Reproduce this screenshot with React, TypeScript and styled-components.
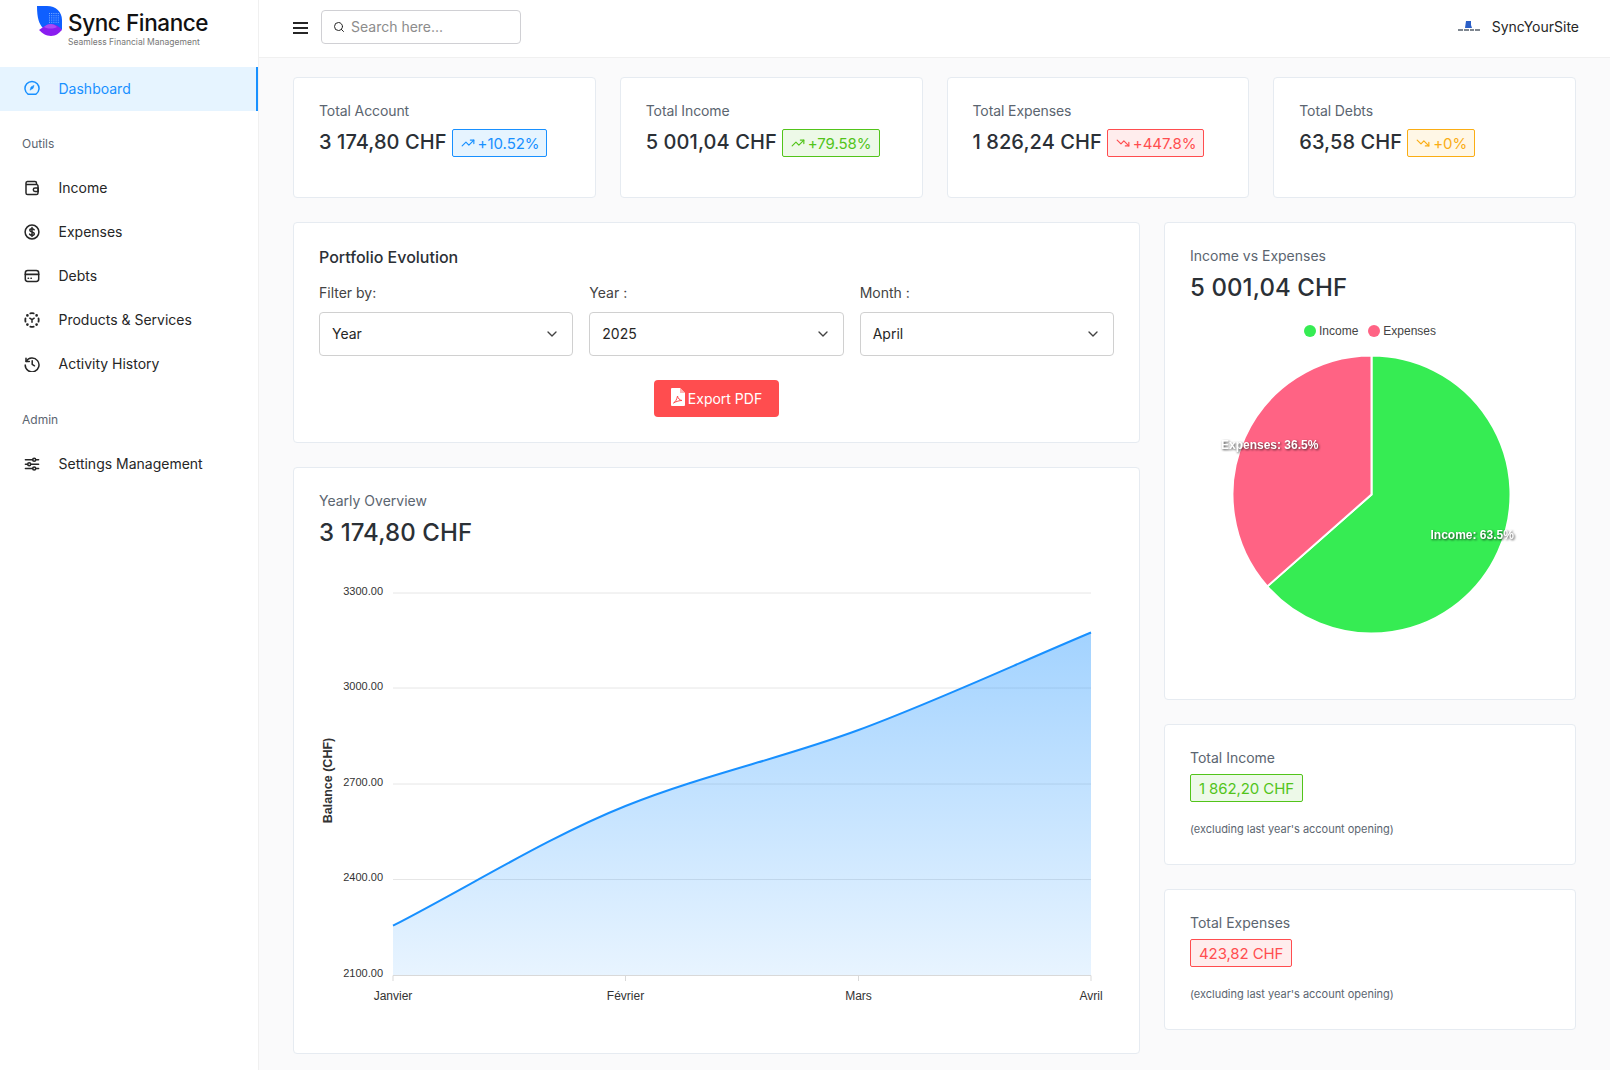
import React from "react";
import styled, { createGlobalStyle } from "styled-components";
import { ChevronDown, TrendingUp, TrendingDown, Search } from "lucide-react";

const FONT = `"Inter", "Noto Sans", "Liberation Sans", sans-serif`;
const INK = "#2b3036";
const MUTED = "#5b6570";

const Global = createGlobalStyle`
  html, body { margin: 0; padding: 0; background: #fafafb; }
  * { box-sizing: border-box; }
  body { font-family: ${FONT}; color: ${INK}; width: 1610px; height: 1070px; overflow: hidden; }
`;

const Shell = styled.div`
  display: grid;
  grid-template-columns: 259px 1fr;
  width: 1610px;
  height: 1070px;
`;

const Sidebar = styled.aside`
  background: #fff;
  border-right: 1px solid #f0f0f0;
  display: flex;
  flex-direction: column;
`;

const Brand = styled.div`
  height: 67px;
  padding: 6px 0 0 37px;
  display: flex;
  gap: 5px;
  align-items: flex-start;
`;

const BrandText = styled.div`
  display: flex;
  flex-direction: column;
  padding-top: 3px;
`;

const BrandName = styled.div`
  font-size: 22.5px;
  line-height: 27px;
  font-weight: 500;
  color: #111;
  letter-spacing: -0.4px;
`;

const BrandTag = styled.div`
  font-size: 8.5px;
  line-height: 10px;
  color: #777;
  margin-top: 1px;
`;

const NavItem = styled.div<{ $active?: boolean }>`
  height: 44px;
  display: flex;
  align-items: center;
  gap: 19px;
  padding: 0 0 ${(p) => (p.$active ? "2px" : "1px")} 23.500px;
  font-size: 14px;
  color: ${(p) => (p.$active ? "#1890ff" : "#262626")};
  background: ${(p) => (p.$active ? "#e6f4ff" : "transparent")};
  border-right: ${(p) => (p.$active ? "2px solid #1890ff" : "none")};
  width: ${(p) => (p.$active ? "258px" : "auto")};
  svg { flex: none; }
`;

const NavGroup = styled.div<{ $top: number }>`
  font-size: 12px;
  line-height: 16px;
  color: ${MUTED};
  padding: ${(p) => p.$top}px 0 14px 22px;
`;

const Main = styled.div`
  display: flex;
  flex-direction: column;
  min-width: 0;
`;

const Topbar = styled.header`
  height: 58px;
  background: #fff;
  border-bottom: 1px solid #f0f0f0;
  display: flex;
  align-items: center;
  padding: 0 31px 4px 34px;
`;

const Burger = styled.div`
  width: 15px;
  height: 12px;
  display: flex;
  flex-direction: column;
  justify-content: space-between;
  margin: 2px 13px 0 0;
  span { height: 2px; background: #262626; display: block; }
`;

const SearchBox = styled.div`
  width: 200px;
  height: 34px;
  border: 1px solid #d0d0d4;
  border-radius: 4px;
  display: flex;
  align-items: center;
  padding-left: 11px;
  gap: 6px;
  font-size: 14px;
  color: #8c8c8c;
`;

const Spacer = styled.div`
  flex: 1;
`;

const UserName = styled.div`
  font-size: 14px;
  color: #262626;
  margin-left: 11px;
`;

const Content = styled.main`
  padding: 19px 34px 0;
  display: flex;
  flex-direction: column;
  gap: 24px;
`;

const StatRow = styled.div`
  display: grid;
  grid-template-columns: repeat(4, 1fr);
  gap: 24px;
`;

const Card = styled.section`
  background: #fff;
  border: 1px solid #e6ebf1;
  border-radius: 4px;
`;

const StatCard = styled(Card)`
  height: 121px;
  padding: 22px 25px;
`;

const StatLabel = styled.div`
  font-size: 14px;
  line-height: 22px;
  letter-spacing: -0.1px;
  color: ${MUTED};
`;

const StatValueRow = styled.div`
  display: flex;
  align-items: center;
  gap: 5px;
  margin-top: 5px;
`;

const StatValue = styled.div`
  font-size: 20px;
  line-height: 28px;
  font-weight: 500;
  letter-spacing: 0.08px;
  color: ${INK};
  white-space: nowrap;
`;

type Tone = "blue" | "green" | "red" | "amber";
const toneColor: Record<Tone, string> = { blue: "#1890ff", green: "#52c41a", red: "#ff4d4f", amber: "#faad14" };
const toneBg: Record<Tone, string> = { blue: "#e6f4ff", green: "#edf9e8", red: "#ffeded", amber: "#fff7e6" };

const Badge = styled.div<{ $tone: Tone }>`
  height: 28px;
  margin-top: 2px;
  display: inline-flex;
  align-items: center;
  gap: 3px;
  padding: 0 7px 0 8px;
  font-size: 15px;
  letter-spacing: -0.05px;
  color: ${(p) => toneColor[p.$tone]};
  background: ${(p) => toneBg[p.$tone]};
  border: 1px solid ${(p) => toneColor[p.$tone]};
  border-radius: 2px;
  white-space: nowrap;
`;

const Columns = styled.div`
  display: grid;
  grid-template-columns: 847px 412px;
  gap: 24px;
`;

const Stack = styled.div`
  display: flex;
  flex-direction: column;
  gap: 24px;
`;

const FilterCard = styled(Card)`
  height: 221px;
  padding: 23px 25px;
`;

const FilterTitle = styled.h2`
  margin: 0;
  font-size: 16px;
  line-height: 22px;
  font-weight: 500;
  color: ${INK};
`;

const FilterGrid = styled.div`
  display: grid;
  grid-template-columns: repeat(3, 1fr);
  gap: 16px;
  margin-top: 14px;
`;

const FilterLabel = styled.div`
  font-size: 14px;
  line-height: 22px;
  color: #434343;
  margin-bottom: 8px;
`;

const SelectBox = styled.div`
  height: 44px;
  border: 1px solid #d0d0d0;
  border-radius: 4px;
  display: flex;
  align-items: center;
  justify-content: space-between;
  padding: 0 12px 1px;
  font-size: 14px;
  color: #262626;
`;

const ExportRow = styled.div`
  display: flex;
  justify-content: center;
  margin-top: 24px;
`;

const ExportButton = styled.div`
  width: 125px;
  height: 37px;
  border-radius: 4px;
  background: #ff4d4f;
  color: #fff;
  font-size: 14px;
  display: flex;
  align-items: center;
  justify-content: center;
  gap: 3px;
  svg { margin-top: -3px; }
`;

const ChartCard = styled(Card)`
  height: 587px;
  padding: 22px 25px 0;
`;

const CardCaption = styled.div`
  font-size: 14px;
  line-height: 22px;
  color: ${MUTED};
`;

const BigValue = styled.div`
  font-size: 24px;
  line-height: 32px;
  font-weight: 500;
  letter-spacing: 0.1px;
  color: ${INK};
  margin-top: 5px;
`;

const ChartSvg = styled.svg`
  display: block;
  margin: 5px 0 0 -25px;
`;

const PieCard = styled(Card)`
  height: 478px;
  padding: 22px 25px 0;
`;

const Legend = styled.div`
  display: flex;
  justify-content: center;
  gap: 10px;
  margin-top: 20px;
  font: 12px "Liberation Sans", Arial, sans-serif;
  color: #444;
`;

const LegendItem = styled.div`
  display: flex;
  align-items: center;
  gap: 3px;
`;

const Dot = styled.span<{ $color: string }>`
  width: 12px;
  height: 12px;
  border-radius: 50%;
  background: ${(p) => p.$color};
`;

const PieSvg = styled.svg`
  display: block;
  margin: 17px 0 0 -25px;
`;

const SumCard = styled(Card)`
  height: 141px;
  padding: 22px 25px;
`;

const SumValue = styled.div<{ $tone: Tone }>`
  display: inline-flex;
  align-items: center;
  height: 28px;
  padding: 0 8px;
  margin-top: 5px;
  font-size: 15px;
  letter-spacing: -0.1px;
  color: ${(p) => toneColor[p.$tone]};
  background: ${(p) => toneBg[p.$tone]};
  border: 1px solid ${(p) => toneColor[p.$tone]};
  border-radius: 2px;
`;

const SumNote = styled.div`
  margin-top: 19px;
  font-size: 11px;
  line-height: 16px;
  letter-spacing: -0.02px;
  color: ${MUTED};
`;

const ChartLabel = styled.text`
  font-family: "Liberation Sans", Arial, sans-serif;
  font-size: 12px;
  fill: #333;
`;

const SmallLabel = styled(ChartLabel)`
  font-size: 11px;
`;

const AxisTitle = styled(ChartLabel)`
  font-weight: 700;
  font-size: 12.5px;
`;

const PieLabel = styled.text`
  font-family: "Liberation Sans", Arial, sans-serif;
  font-size: 12px;
  font-weight: 700;
  fill: #fff;
  filter: drop-shadow(1px 1px 1px rgba(0, 0, 0, 0.7));
`;

const I = ({ children, color = "currentColor" }: { children: React.ReactNode; color?: string }) => (
  <svg width="16" height="16" viewBox="0 0 16 16" fill="none" stroke={color} strokeWidth="1.5" strokeLinecap="round" strokeLinejoin="round">
    {children}
  </svg>
);

const DashIcon = () => (
  <I>
    <path d="M4 14.200A7 7 0 1 1 12 14.200Z" />
    <path d="M6.300 9.800 7 7l3-1.600-1 3-2.700 1.400Z" fill="currentColor" strokeWidth="0.6" />
  </I>
);
const WalletIcon = () => (
  <I>
    <path d="M12.500 4.500V3a1.600 1.600 0 0 0-1.600-1.600H3.400A1.600 1.600 0 0 0 2 3v10a1.600 1.600 0 0 0 1.600 1.600h8.800A1.600 1.600 0 0 0 14 13V6a1.500 1.500 0 0 0-1.500-1.500H2.600" />
    <path d="M14.200 8H11a1.700 1.700 0 0 0 0 3.400h3.200Z" />
  </I>
);
const DollarIcon = () => (
  <I>
    <circle cx="8" cy="8" r="6.900" />
    <path d="M10.200 5.800C9.800 5 9 4.700 8 4.700c-1.300 0-2.200.6-2.200 1.600 0 2.300 4.500 1.100 4.500 3.400 0 1-1 1.600-2.300 1.600-1.100 0-2-.4-2.400-1.200M8 3.400v9.200" />
  </I>
);
const CardIcon = () => (
  <I>
    <rect x="1.300" y="2.600" width="13.400" height="10.800" rx="2.400" />
    <path d="M1.300 6.400h13.400M4.200 10.300h.3M7 10.300h.3" strokeWidth="1.600" />
  </I>
);
const ProductIcon = () => (
  <I>
    <path d="M6.300 1.400a6.800 6.800 0 0 1 3.400 0M14.500 6.300a6.800 6.800 0 0 1 0 3.400M9.700 14.600a6.800 6.800 0 0 1-3.400 0M1.500 9.700a6.800 6.800 0 0 1 0-3.400" strokeWidth="1.800" />
    <path d="M5.800 6.200 8 7.700l2.200-1.500M8 7.700v2.500" />
    <circle cx="3.400" cy="3.400" r=".6" fill="currentColor" />
    <circle cx="12.600" cy="3.400" r=".6" fill="currentColor" />
    <circle cx="3.400" cy="12.600" r=".6" fill="currentColor" />
    <circle cx="12.600" cy="12.600" r=".6" fill="currentColor" />
  </I>
);
const HistoryIcon = () => (
  <I>
    <path d="M2.200 5.400A6.900 6.900 0 1 1 1.200 9" />
    <path d="M2 2.200v3.400h3.300" />
    <path d="M8.200 4.800v3.600l2.300 1.400" />
  </I>
);
const SlidersIcon = () => (
  <I>
    <path d="M1.400 3.800h7.200M11.800 3.800h2.800M1.400 8.200h2.200M6.800 8.200h7.800M1.400 12.600h7.200M11.800 12.600h2.800" />
    <circle cx="10.200" cy="3.800" r="1.500" />
    <circle cx="5.200" cy="8.200" r="1.500" />
    <circle cx="10.200" cy="12.600" r="1.500" />
  </I>
);

const logoDots = Array.from({ length: 25 }, (_, i) => ({ x: 12 + (i % 5) * 2.2, y: 7 + Math.floor(i / 5) * 2.2 }));

const LogoMark = () => (
  <svg width="26" height="31" viewBox="0 0 26 31">
    <path d="M0 0h10c9 0 15 6 15 14v10c-4-3-9-4-12-4-4 0-6 1-7 2C2 18 0 12 0 0Z" fill="#0f5fff" />
    {logoDots.map((d) => (
      <rect key={`${d.x}-${d.y}`} x={d.x} y={d.y} width="1" height="1" fill="#7fb0ff" />
    ))}
    <path d="M2 24c4-3 7-5 11-6 5-.4 9 2 12 6-3 3-6 6-11 6-5 0-9-3-12-6Z" fill="#8a1df0" />
    <path d="M7 21c2-2 4-3 7-3 2 0 4 1 6 3-4 2-9 2-13 0Z" fill="#a94cf5" />
  </svg>
);
const PdfIcon = () => (
  <svg width="14" height="18" viewBox="0 0 14 18">
    <path d="M0 1a1 1 0 0 1 1-1h8l5 5v12a1 1 0 0 1-1 1H1a1 1 0 0 1-1-1Z" fill="#fff" />
    <path d="M9 0v5h5" fill="#ffb3b4" />
    <path d="M2.500 15c2-1 3.500-4 4-7 .6 2.500 2 4 4.500 4.500-2.500 0-5.500.8-8.500 2.500Z" fill="none" stroke="#ff4d4f" strokeWidth="1" />
  </svg>
);
const SiteLogo = () => (
  <svg width="24" height="14" viewBox="0 0 24 14">
    <path d="M9 1h5v4l1 3H8Z" fill="#2b5fc7" />
    <path d="M1 10h5M7 10h5M13 10h4M18 10h5" stroke="#56606c" strokeWidth="1.400" />
  </svg>
);

const stats: { label: string; value: string; delta: string; tone: Tone; up: boolean }[] = [
  { label: "Total Account", value: "3 174,80 CHF", delta: "+10.52%", tone: "blue", up: true },
  { label: "Total Income", value: "5 001,04 CHF", delta: "+79.58%", tone: "green", up: true },
  { label: "Total Expenses", value: "1 826,24 CHF", delta: "+447.8%", tone: "red", up: false },
  { label: "Total Debts", value: "63,58 CHF", delta: "+0%", tone: "amber", up: false },
];

const filters = [
  { label: "Filter by:", value: "Year" },
  { label: "Year :", value: "2025" },
  { label: "Month :", value: "April" },
];

const yTicks = [
  { label: "3300.00", y: 116 },
  { label: "3000.00", y: 211 },
  { label: "2700.00", y: 307 },
  { label: "2400.00", y: 402.500 },
  { label: "2100.00", y: 498.500 },
];
const xTicks = [
  { label: "Janvier", x: 99 },
  { label: "Février", x: 331.500 },
  { label: "Mars", x: 564.500 },
  { label: "Avril", x: 797 },
];

const LINE = "M99 448.700 C176.500 408.800 254 360 331.500 329 C409 298 487 281.700 564.500 253 C642 224.300 719.500 188 797 155.500";

const YearChart = () => (
  <ChartSvg width="845" height="490" viewBox="0 77 845 490">
    <defs>
      <linearGradient id="area" x1="0" y1="0" x2="0" y2="1">
        <stop offset="0" stopColor="#1890ff" stopOpacity="0.4" />
        <stop offset="1" stopColor="#1890ff" stopOpacity="0.1" />
      </linearGradient>
    </defs>
    {yTicks.map((t) => (
      <g key={t.label}>
        <line x1="99" x2="797" y1={t.y} y2={t.y} stroke="#e6e6e6" />
        <SmallLabel x="89" y={t.y + 1.500} textAnchor="end">{t.label}</SmallLabel>
      </g>
    ))}
    <path d={`${LINE} L797 498.500 L99 498.500 Z`} fill="url(#area)" />
    <path d={LINE} fill="none" stroke="#1890ff" strokeWidth="2" />
    {xTicks.map((t) => (
      <g key={t.label}>
        <line x1={t.x} x2={t.x} y1="498.500" y2="504" stroke="#d9d9d9" />
        <ChartLabel x={t.x} y="523" textAnchor="middle">{t.label}</ChartLabel>
      </g>
    ))}
    <line x1="99" x2="797" y1="498.500" y2="498.500" stroke="#d9d9d9" />
    <AxisTitle transform="translate(38 303.500) rotate(-90)" textAnchor="middle">Balance (CHF)</AxisTitle>
  </ChartSvg>
);

const Pie = () => {
  const cx = 206.5, cy = 139.5, r = 139;
  const a = (63.5 / 100) * 2 * Math.PI;
  const ex = cx + r * Math.sin(a), ey = cy - r * Math.cos(a);
  return (
    <PieSvg width="410" height="290" viewBox="0 0 410 290">
      <path d={`M${cx} ${cy} L${cx} ${cy - r} A${r} ${r} 0 1 1 ${ex} ${ey} Z`} fill="#36ec53" stroke="#fff" strokeWidth="2" />
      <path d={`M${cx} ${cy} L${ex} ${ey} A${r} ${r} 0 0 1 ${cx} ${cy - r} Z`} fill="#ff6384" stroke="#fff" strokeWidth="2" />
      <PieLabel x="56" y="94">Expenses: 36.5%</PieLabel>
      <PieLabel x="265.500" y="184">Income: 63.5%</PieLabel>
    </PieSvg>
  );
};

export default function App() {
  return (
    <Shell>
      <Global />
      <Sidebar>
        <Brand>
          <LogoMark />
          <BrandText>
            <BrandName>Sync Finance</BrandName>
            <BrandTag>Seamless Financial Management</BrandTag>
          </BrandText>
        </Brand>
        <NavItem $active><DashIcon />Dashboard</NavItem>
        <NavGroup $top={25}>Outils</NavGroup>
        <NavItem><WalletIcon />Income</NavItem>
        <NavItem><DollarIcon />Expenses</NavItem>
        <NavItem><CardIcon />Debts</NavItem>
        <NavItem><ProductIcon />Products &amp; Services</NavItem>
        <NavItem><HistoryIcon />Activity History</NavItem>
        <NavGroup $top={26}>Admin</NavGroup>
        <NavItem><SlidersIcon />Settings Management</NavItem>
      </Sidebar>
      <Main>
        <Topbar>
          <Burger><span /><span /><span /></Burger>
          <SearchBox>
            <Search size={12} color="#262626" />
            Search here...
          </SearchBox>
          <Spacer />
          <SiteLogo />
          <UserName>SyncYourSite</UserName>
        </Topbar>
        <Content>
          <StatRow>
            {stats.map((s) => (
              <StatCard key={s.label}>
                <StatLabel>{s.label}</StatLabel>
                <StatValueRow>
                  <StatValue>{s.value}</StatValue>
                  <Badge $tone={s.tone}>
                    {s.up ? <TrendingUp size={14} strokeWidth={2} /> : <TrendingDown size={14} strokeWidth={2} />}
                    {s.delta}
                  </Badge>
                </StatValueRow>
              </StatCard>
            ))}
          </StatRow>
          <Columns>
            <Stack>
              <FilterCard>
                <FilterTitle>Portfolio Evolution</FilterTitle>
                <FilterGrid>
                  {filters.map((f) => (
                    <div key={f.label}>
                      <FilterLabel>{f.label}</FilterLabel>
                      <SelectBox>
                        {f.value}
                        <ChevronDown size={16} color="#434343" />
                      </SelectBox>
                    </div>
                  ))}
                </FilterGrid>
                <ExportRow>
                  <ExportButton><PdfIcon />Export PDF</ExportButton>
                </ExportRow>
              </FilterCard>
              <ChartCard>
                <CardCaption>Yearly Overview</CardCaption>
                <BigValue>3 174,80 CHF</BigValue>
                <YearChart />
              </ChartCard>
            </Stack>
            <Stack>
              <PieCard>
                <CardCaption>Income vs Expenses</CardCaption>
                <BigValue>5 001,04 CHF</BigValue>
                <Legend>
                  <LegendItem><Dot $color="#36ec53" />Income</LegendItem>
                  <LegendItem><Dot $color="#ff6384" />Expenses</LegendItem>
                </Legend>
                <Pie />
              </PieCard>
              <SumCard>
                <CardCaption>Total Income</CardCaption>
                <SumValue $tone="green">1 862,20 CHF</SumValue>
                <SumNote>(excluding last year's account opening)</SumNote>
              </SumCard>
              <SumCard>
                <CardCaption>Total Expenses</CardCaption>
                <SumValue $tone="red">423,82 CHF</SumValue>
                <SumNote>(excluding last year's account opening)</SumNote>
              </SumCard>
            </Stack>
          </Columns>
        </Content>
      </Main>
    </Shell>
  );
}
